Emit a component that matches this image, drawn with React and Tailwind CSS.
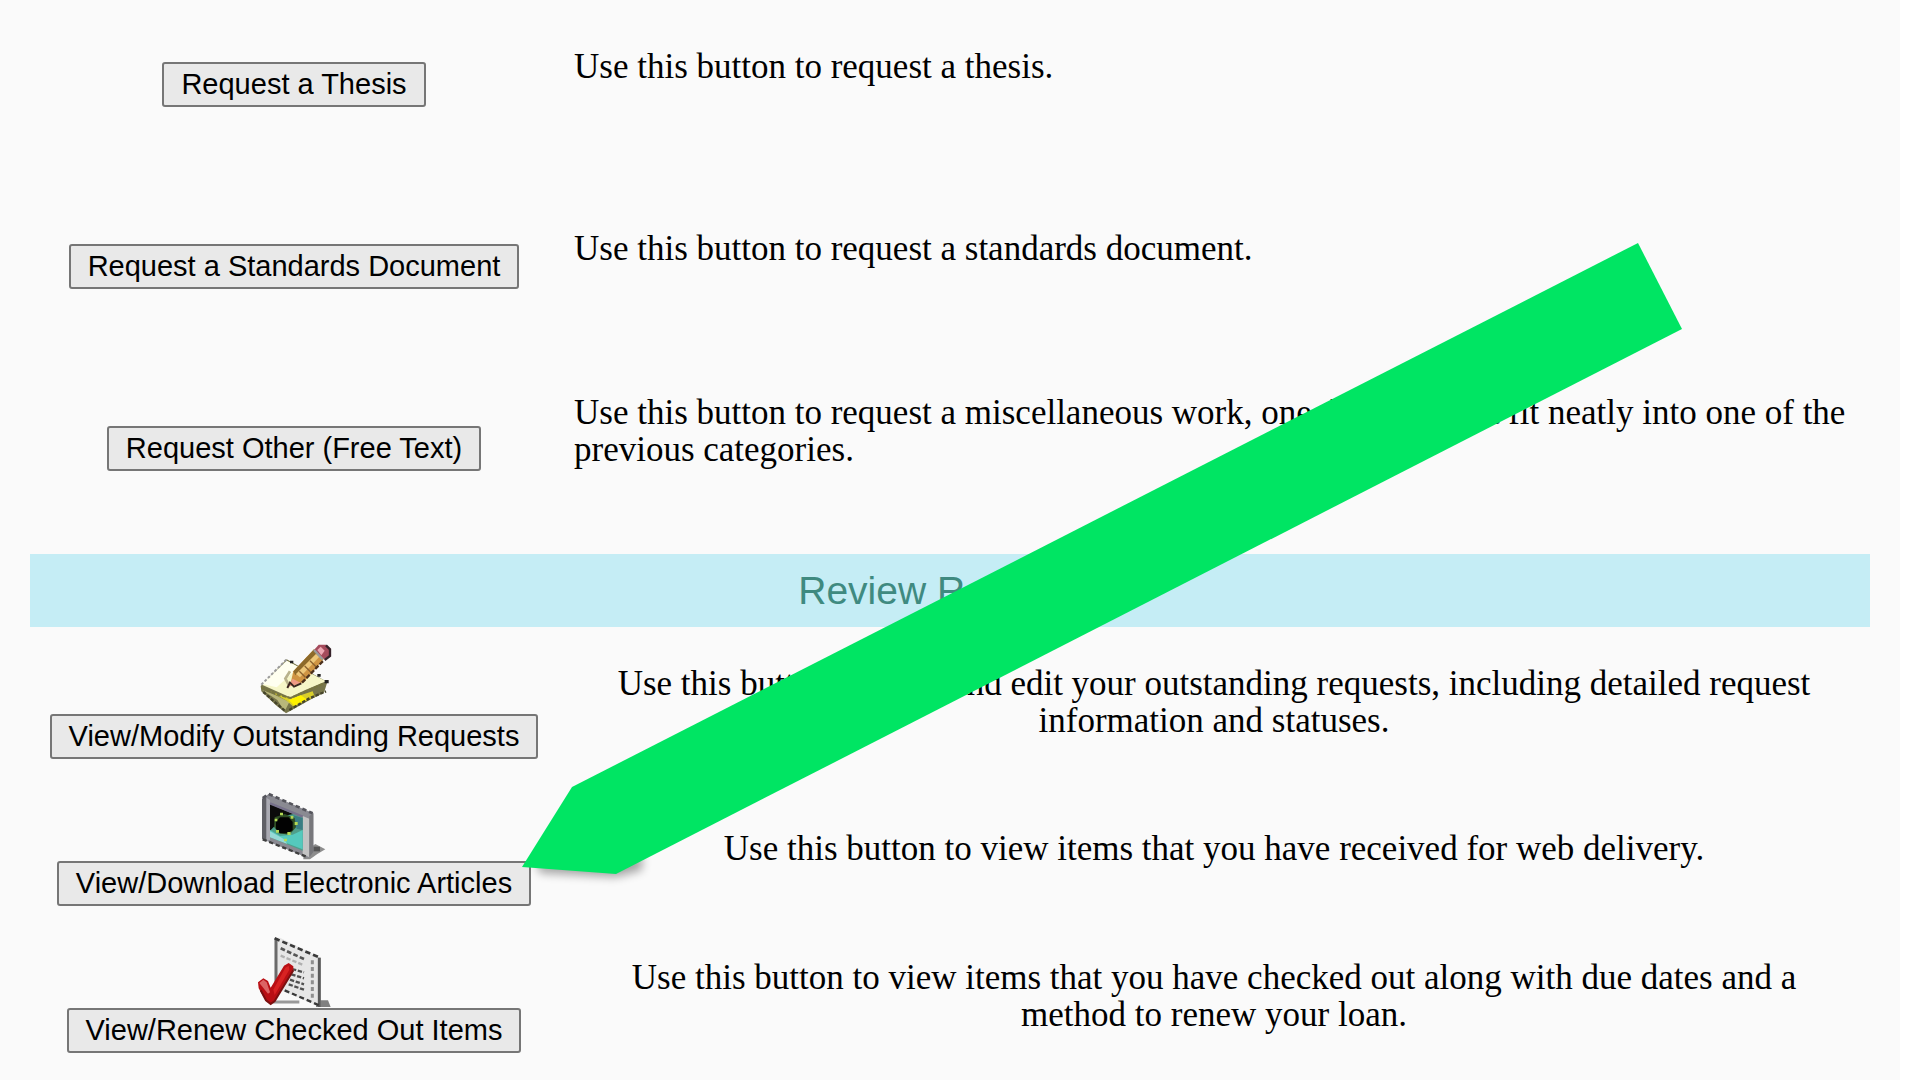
const requestRows = [
  { label: "Request a Thesis", text: "Use this button to request a thesis." },
  {
    label: "Request a Standards Document",
    text: "Use this button to request a standards document.",
  },
  {
    label: "Request Other (Free Text)",
    text: "Use this button to request a miscellaneous work, one that does not fit neatly into one of the previous categories.",
  },
];

const reviewRows = [
  {
    label: "View/Modify Outstanding Requests",
    text: "Use this button to view and edit your outstanding requests, including detailed request information and statuses.",
    Icon: NotesIcon,
  },
  {
    label: "View/Download Electronic Articles",
    text: "Use this button to view items that you have received for web delivery.",
    Icon: ScreenIcon,
  },
  {
    label: "View/Renew Checked Out Items",
    text: "Use this button to view items that you have checked out along with due dates and a method to renew your loan.",
    Icon: ChecklistIcon,
  },
];

function NotesIcon() {
  return (
    <svg viewBox="42 38 240 210" className="block h-[70px] w-20 overflow-visible" aria-hidden="true">
      <path d="M62 164L140 84L262 152L252 184L216 202L138 246L108 222L64 180Z" fill="#77754a" />
      <path d="M66 176L112 206L134 240L148 212L104 190Z" fill="#b9b77a" />
      <path d="M90 180L150 202L218 180L224 196L160 226L140 208Z" fill="#d9cf2a" />
      <path d="M146 206L182 192L200 204L164 224Z" fill="#fff200" />
      <path d="M66 160L140 88L258 150L196 176L150 198Z" fill="#f6f6c8" />
      <path d="M66 158L140 88L176 108L110 168Z" fill="#fffff0" />
      <path d="M64 160L140 84" stroke="#9a9a9a" strokeWidth="6" strokeDasharray="8 6" />
      <path d="M64 168L112 190L152 200L252 156" fill="none" stroke="#77753f" strokeWidth="6" strokeDasharray="12 5" />
      <path d="M70 182L134 238M148 236L206 202L258 180" fill="none" stroke="#45442a" strokeWidth="7" strokeDasharray="10 5" />
      <path d="M148 164L136 142L150 120" fill="none" stroke="#b9b38c" strokeWidth="8" />
      <path d="M150 88h10v8h-10zM232 128h10v8h-10zM254 146h12v10h-12z" fill="#222" />
      <path d="M150 164L160 120L222 54L252 82L192 152Z" fill="#cf9443" />
      <path d="M160 120L222 54L232 64L166 132Z" fill="#8d6a2a" />
      <path d="M168 128L228 68L238 76L180 138Z" fill="#ecc678" />
      <path d="M178 120L196 138M194 104L212 122M210 88L228 106" stroke="#8b6230" strokeWidth="4" />
      <path d="M186 154L250 88" stroke="#4b301c" strokeWidth="7" strokeDasharray="14 5" />
      <path d="M144 166L158 142L184 156Z" fill="#ef9a84" />
      <path d="M142 170L150 154L162 166L184 156" fill="none" stroke="#3c2720" strokeWidth="6" />
      <path d="M222 56L236 40H258L270 52V72L252 84Z" fill="#a54b5c" />
      <path d="M232 56L242 46L254 58L244 72Z" fill="#eda8b4" />
      <path d="M222 56L248 84" stroke="#9a9a9a" strokeWidth="7" />
      <path d="M258 42L270 54V74L254 86" fill="none" stroke="#36232a" strokeWidth="7" />
    </svg>
  );
}

function ScreenIcon() {
  return (
    <svg viewBox="42 33 240 210" className="block h-[70px] w-20 overflow-visible" aria-hidden="true">
      <path d="M190 216L226 192L256 208L232 222L210 238H190Z" fill="#8d8d8d" />
      <path d="M220 200h20v14h-20z" fill="#555" />
      <path d="M66 56L86 42L220 100V216L204 234L68 178Z" fill="#8a8a92" />
      <path d="M66 56L78 52V180L66 176Z" fill="#606066" />
      <path d="M80 54L90 60V180L80 182Z" fill="#aaaab2" />
      <path d="M188 108L208 116V232L188 222Z" fill="#c3c3c3" />
      <path d="M208 108L220 100V216L208 232Z" fill="#77777b" />
      <path d="M90 72L188 112V212L90 172Z" fill="#4f9f8b" />
      <path d="M90 72L160 102L132 108L108 134L90 152Z" fill="#0b0b0b" />
      <path d="M160 106L188 114V150L170 146Z" fill="#397d84" />
      <path d="M90 150L120 168L158 164L188 150V208L90 170Z" fill="#55c9bd" />
      <path d="M90 154L130 176L142 192L90 172Z" fill="#97d9d6" />
      <path d="M104 112L134 102L164 114L168 142L148 164L116 160L102 140Z" fill="#2e4d24" />
      <path d="M120 112H146L158 126V150L144 160H120L108 146V126Z" fill="#020202" />
      <path d="M120 98h9v8h-9zM104 116h8v8h-8zM164 126h9v9h-9zM108 150h9v8h-9zM142 156h10v9h-10zM132 176h9v8h-9zM152 108h8v8h-8z" fill="#b4d955" />
      <path d="M68 54L86 42L218 100" fill="none" stroke="#55555c" strokeWidth="8" strokeDasharray="13 9" />
      <path d="M68 178L204 232" stroke="#3f3f3f" strokeWidth="7" strokeDasharray="13 8" />
      <path d="M90 70L188 110" stroke="#77718b" strokeWidth="7" />
    </svg>
  );
}

function ChecklistIcon() {
  return (
    <svg viewBox="42 39 240 210" className="block h-[70px] w-20 overflow-visible" aria-hidden="true">
      <path d="M228 226H264L272 246H228Z" fill="#808080" />
      <path d="M104 38L120 38L242 98V246L104 188Z" fill="#e6e6e6" />
      <path d="M108 40V186" stroke="#6a6a6a" strokeWidth="9" />
      <path d="M238 98V246" stroke="#5a5a5a" strokeWidth="9" />
      <path d="M104 40L240 98" stroke="#3a3a3a" strokeWidth="8" strokeDasharray="16 9" />
      <path d="M134 196L240 242" stroke="#3a3a3a" strokeWidth="7" strokeDasharray="15 9" />
      <path d="M122 70L196 104" stroke="#555" strokeWidth="8" strokeDasharray="14 7" />
      <path d="M122 92L190 120" stroke="#b0b0b0" strokeWidth="7" strokeDasharray="13 6" />
      <path d="M156 132L192 142M154 148L192 160M150 164L192 178M146 178L192 194" stroke="#505050" strokeWidth="7" strokeDasharray="13 5" />
      <path d="M217 106V220" stroke="#8f8f8f" strokeWidth="9" strokeDasharray="12 8" />
      <path d="M98 231H178" stroke="#999" strokeWidth="9" />
      <path d="M54 172L70 160L84 168L92 188L132 122L146 114L160 124V138L104 228L92 238L78 228L56 190Z" fill="#b90f14" />
      <path d="M58 174L70 164L80 172L90 202L84 206Z" fill="#dc6464" />
      <path d="M100 194L136 128L146 122L148 134L104 210Z" fill="#d82222" />
      <path d="M160 136L104 228L92 237L78 226L62 196" fill="none" stroke="#7a1010" strokeWidth="6" />
    </svg>
  );
}

// thick green marker that points at the electronic articles button
function Arrow() {
  return (
    <svg
      viewBox="522 243 1160 631"
      className="pointer-events-none absolute left-[522px] top-[243px] h-[631px] w-[1160px] overflow-visible"
      aria-hidden="true"
    >
      <defs>
        <filter id="soft" x="-20%" y="-60%" width="140%" height="240%">
          <feGaussianBlur stdDeviation="5" />
        </filter>
      </defs>
      <path d="M536 862L642 855V870L616 877L540 873Z" fill="#000" opacity="0.35" filter="url(#soft)" />
      <path d="M522 867L572 787L1638 243L1682 329L616 874Z" fill="#00e563" />
    </svg>
  );
}

function FormButton({ children }) {
  return (
    <button
      type="button"
      className="h-[45px] whitespace-nowrap rounded-[3px] border-2 border-[#767676] bg-[#e9e9e9] px-[17px] font-['Liberation_Sans',Arial,sans-serif] text-[29px] leading-[37px] text-black"
    >
      {children}
    </button>
  );
}

export default function App() {
  return (
    <div className="min-h-screen bg-white pr-5">
      <main className="relative min-h-screen bg-[#fafafa] px-[30px] pt-[26px] font-['Liberation_Serif','Times_New_Roman',serif] text-[35px] leading-[37px] text-black">
        <section className="flex flex-col gap-[101px]">
          {requestRows.map((row) => (
            <div key={row.label} className="grid grid-cols-[528px_1fr] items-center">
              <div className="flex justify-center pt-9">
                <FormButton>{row.label}</FormButton>
              </div>
              <p className="pl-4">{row.text}</p>
            </div>
          ))}
        </section>

        <h2 className="mt-[83px] bg-[#c5edf5] text-center font-['Liberation_Sans',Arial,sans-serif] text-[39px] leading-[73px] text-[#3f8a80]">
          Review Requests
        </h2>

        <section className="flex flex-col gap-8 pt-[17px]">
          {reviewRows.map(({ label, text, Icon }) => (
            <div key={label} className="grid grid-cols-[528px_1fr] items-center">
              <div className="flex flex-col items-center">
                <Icon />
                <FormButton>{label}</FormButton>
              </div>
              <p className="px-8 text-center">{text}</p>
            </div>
          ))}
        </section>

        <Arrow />
      </main>
    </div>
  );
}
